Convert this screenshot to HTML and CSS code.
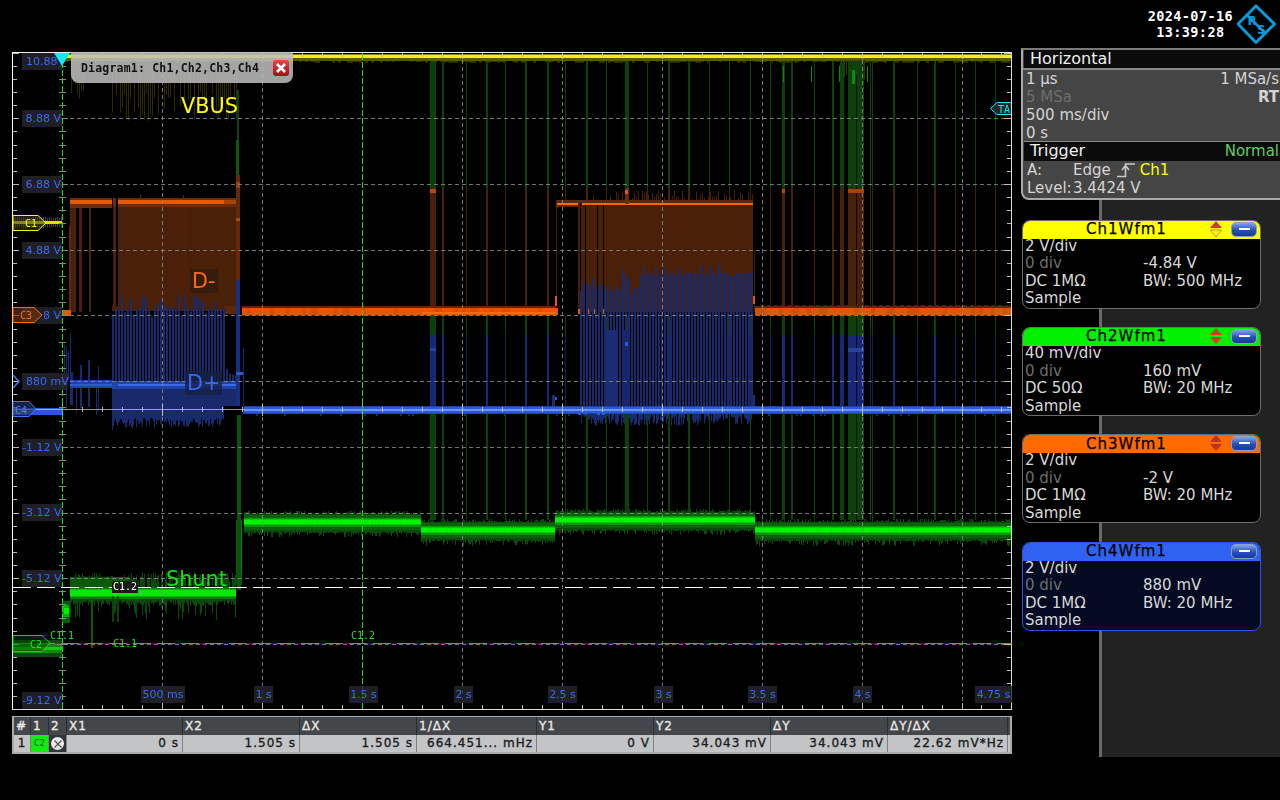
FILE: index.html
```html
<!DOCTYPE html>
<html lang="en">
<head>
<meta charset="utf-8">
<title>Oscilloscope</title>
<link rel="stylesheet" href="styles.css">
</head>
<body>
<div class="screen">
  <header class="topbar">
    <div class="clock"><div>2024-07-16</div><div>13:39:28</div></div>
    <svg class="logo" width="40" height="40" viewBox="0 0 40 40">
      <path d="M19 2 L37.5 20 L19 38.5 L1 20 Z" fill="none" stroke="#0b9ad8" stroke-width="3"/>
      <path d="M9.5 10.5 L28.5 29.5" stroke="#0b9ad8" stroke-width="2.5"/>
      <text x="10.5" y="21" class="logo-text">R</text>
      <text x="20" y="30" class="logo-text">S</text>
    </svg>
  </header>
  <main class="main">
    <section class="left">
      <div class="plot">
        <canvas id="scope" width="1000" height="658"></canvas>

        <span class="ylab y0">10.88</span>
        <span class="ylab y1">8.88 V</span>
        <span class="ylab y2">6.88 V</span>
        <span class="ylab y3">4.88 V</span>
        <span class="ylab y4">8 V</span>
        <span class="ylab y5 wide">880 mV</span>
        <span class="ylab y6">-1.12 V</span>
        <span class="ylab y7">-3.12 V</span>
        <span class="ylab y8">-5.12 V</span>
        <span class="ylab y9">-9.12 V</span>

        <span class="xlab x0">500 ms</span>
        <span class="xlab x1">1 s</span>
        <span class="xlab x2">1.5 s</span>
        <span class="xlab x3">2 s</span>
        <span class="xlab x4">2.5 s</span>
        <span class="xlab x5">3 s</span>
        <span class="xlab x6">3.5 s</span>
        <span class="xlab x7">4 s</span>
        <span class="xlab x8">4.75 s</span>

        <svg class="marks" width="1000" height="658" viewBox="12 52 1000 658">
          <path d="M54 53 H70 L62 66 Z" fill="#19e6f0"/>
          <path d="M13 215.5 H38 L46 223 L38 230.5 H13 Z" fill="rgba(60,60,0,.55)" stroke="#ffff00"/>
          <text x="25" y="227" class="mark-text" fill="#ffff00">C1</text>
          <path d="M13 307.5 H34 L42 315 L34 322.5 H13 Z" fill="rgba(110,50,10,.65)" stroke="#ff6a13"/>
          <text x="20" y="319" class="mark-text" fill="#ff6a13">C3</text>
          <path d="M13 401.5 H29 L36 409 L29 416.5 H13 Z" fill="rgba(40,50,90,.65)" stroke="#3c78f0"/>
          <text x="15" y="414" class="mark-text" fill="#5f7fc8">C4</text>
          <path d="M13 635.5 H42 L50 643 L42 651.5 H13 Z" fill="rgba(0,60,0,.5)" stroke="#19d219"/>
          <text x="30" y="648" class="mark-text" fill="#22e022">C2</text>
          <path d="M13 375 L19 381.5 L13 388" fill="none" stroke="#3c78f0" stroke-width="1.5"/>
          <path d="M1011 102.5 H997 L990.5 108.5 L997 114.5 H1011" fill="#202a2a" stroke="#19e6f0"/>
          <text x="998" y="113" class="mark-text" fill="#19e6f0">TA</text>
        </svg>

        <span class="note vbus">VBUS</span>
        <span class="note dminus">D-</span>
        <span class="note dplus">D+</span>
        <span class="note shunt">Shunt</span>

        <span class="cur cur-a">C1.1</span>
        <span class="cur cur-b">C1.2</span>
        <span class="cur cur-c">C1.1</span>
        <span class="cur cur-d">C1.2</span>

        <div class="dialog">
          <span class="dialog-title">Diagram1: Ch1,Ch2,Ch3,Ch4</span>
          <span class="close">
            <svg width="12" height="12" viewBox="0 0 12 12"><path d="M2 2 L10 10 M10 2 L2 10" stroke="#fff" stroke-width="2.6"/></svg>
          </span>
        </div>
      </div>

      <div class="cursors">
        <div class="row head">
          <div class="cell">#</div><div class="cell">1</div><div class="cell">2</div>
          <div class="cell">X1</div><div class="cell">X2</div><div class="cell">ΔX</div><div class="cell">1/ΔX</div>
          <div class="cell">Y1</div><div class="cell">Y2</div><div class="cell">ΔY</div><div class="cell">ΔY/ΔX</div>
        </div>
        <div class="row vals">
          <div class="cell idx">1</div>
          <div class="cell chip">C2</div>
          <div class="cell xbtn"><span class="xdot"><svg width="10" height="10" viewBox="0 0 10 10"><path d="M1.5 1.5 L8.5 8.5 M8.5 1.5 L1.5 8.5" stroke="#555" stroke-width="1.4"/></svg></span></div>
          <div class="cell num">0 s</div><div class="cell num">1.505 s</div><div class="cell num">1.505 s</div><div class="cell num">664.451... mHz</div>
          <div class="cell num">0 V</div><div class="cell num">34.043 mV</div><div class="cell num">34.043 mV</div><div class="cell num">22.62 mV*Hz</div>
        </div>
      </div>
    </section>

    <aside class="side">
      <div class="hpanel">
        <div class="hhead">Horizontal</div>
        <div class="hline"><span>1 µs</span><span>1 MSa/s</span></div>
        <div class="hline"><span class="dim">5 MSa</span><span class="rt">RT</span></div>
        <div class="hline"><span>500 ms/div</span></div>
        <div class="hline"><span>0 s</span></div>
        <div class="hhead trig"><span>Trigger</span><span class="normal">Normal</span></div>
        <div class="tline">
          <span class="tl-a">A:</span><span class="tl-b">Edge</span>
          <svg class="edge" width="18" height="16" viewBox="0 0 18 16"><path d="M0 14.5 H8.5 V2 H18 M5 8 L8.5 3.5 L12 8" fill="none" stroke="#c8c8c8" stroke-width="1.6"/></svg>
          <span class="ch1">Ch1</span>
        </div>
        <div class="tline"><span class="tl-a level">Level:</span><span>3.4424 V</span></div>
      </div>

      <div class="card">
        <div class="chead yellow"><span class="ctitle">Ch1Wfm1</span>
          <svg class="arrows" width="14" height="18" viewBox="0 0 14 18"><path d="M7 1 L13 8 H1 Z" fill="#c8402a"/><path d="M1.5 10 H12.5 L7 17 Z" fill="none" stroke="#d08a10"/></svg>
          <span class="minus"></span></div>
        <div class="cbody">
          <div class="full">2 V/div</div>
          <div class="dim">0 div</div><div>-4.84 V</div>
          <div>DC 1MΩ</div><div>BW: 500 MHz</div>
          <div class="full">Sample</div>
        </div>
      </div>

      <div class="card">
        <div class="chead green"><span class="ctitle">Ch2Wfm1</span>
          <svg class="arrows" width="14" height="18" viewBox="0 0 14 18"><path d="M7 1 L13 8 H1 Z" fill="#c8402a"/><path d="M1 10 H13 L7 17 Z" fill="#c8402a"/></svg>
          <span class="minus"></span></div>
        <div class="cbody">
          <div class="full">40 mV/div</div>
          <div class="dim">0 div</div><div>160 mV</div>
          <div>DC 50Ω</div><div>BW: 20 MHz</div>
          <div class="full">Sample</div>
        </div>
      </div>

      <div class="card">
        <div class="chead orange"><span class="ctitle">Ch3Wfm1</span>
          <svg class="arrows" width="14" height="18" viewBox="0 0 14 18"><path d="M7 1 L13 8 H1 Z" fill="#b8341f"/><path d="M1 10 H13 L7 17 Z" fill="#b8341f"/></svg>
          <span class="minus"></span></div>
        <div class="cbody">
          <div class="full">2 V/div</div>
          <div class="dim">0 div</div><div>-2 V</div>
          <div>DC 1MΩ</div><div>BW: 20 MHz</div>
          <div class="full">Sample</div>
        </div>
      </div>

      <div class="card selected">
        <div class="chead blue"><span class="ctitle">Ch4Wfm1</span>
          <span class="minus"></span></div>
        <div class="cbody">
          <div class="full">2 V/div</div>
          <div class="dim">0 div</div><div>880 mV</div>
          <div>DC 1MΩ</div><div>BW: 20 MHz</div>
          <div class="full">Sample</div>
        </div>
      </div>
    </aside>
  </main>
</div>
<script src="scope.js"></script>
</body>
</html>
```
FILE: styles.css
```css
* { box-sizing: border-box; }
html, body { margin: 0; padding: 0; background: #000; }
body { width: 1280px; height: 800px; overflow: hidden; font-family: "DejaVu Sans", sans-serif; color: #ddd; }

.screen { display: flex; flex-direction: column; width: 1280px; height: 800px; }

.topbar { height: 48px; display: flex; justify-content: flex-end; align-items: flex-start; padding-right: 3px; }
.clock { margin-top: 8px; margin-right: 4px; font: bold 13.5px/16px "DejaVu Sans Mono", monospace; letter-spacing: .4px; text-align: center; color: #fff; }
.logo { margin-top: 4px; }
.logo-text { font: bold 12px "DejaVu Sans", sans-serif; fill: #0b9ad8; }

.main { display: flex; height: 709px; }
.left { width: 1012px; padding: 4px 0 0 12px; display: flex; flex-direction: column; gap: 6px; }

.plot { position: relative; width: 1000px; height: 658px; flex: none; overflow: hidden; }
.plot canvas { display: block; }
.marks { position: absolute; left: 0; top: 0; }
.mark-text { font: 10px "DejaVu Sans Mono", monospace; }

.ylab, .xlab { position: absolute; height: 17px; font-size: 11px; line-height: 17px; color: #3a68f4; background: rgba(38, 38, 46, .82); white-space: nowrap; }
.ylab { left: 10px; width: 40px; text-align: right; padding-right: 1px; overflow: visible; }
.ylab.wide { width: 46px; text-align: left; padding-left: 4px; }
.y0 { top: 1px; text-align: left; padding-left: 4px; }
.y1 { top: 58px; }
.y2 { top: 124px; }
.y3 { top: 190px; }
.y4 { top: 255px; }
.y5 { top: 321px; }
.y6 { top: 387px; }
.y7 { top: 452px; }
.y8 { top: 518px; }
.y9 { top: 640px; }

.xlab { top: 634px; text-align: center; }
.x0 { left: 129px; width: 44px; }
.x1 { left: 242px; width: 19px; }
.x2 { left: 337px; width: 29px; }
.x3 { left: 442px; width: 19px; }
.x4 { left: 536px; width: 29px; }
.x5 { left: 642px; width: 19px; }
.x6 { left: 736px; width: 29px; }
.x7 { left: 841px; width: 19px; }
.x8 { left: 963px; width: 37px; }

.note { position: absolute; font-size: 20.8px; line-height: 24px; padding: 0 2px; white-space: nowrap; }
.vbus { left: 167px; top: 42px; color: #ffff00; }
.dminus { left: 178px; top: 217px; color: #ff6a13; background: rgba(50, 26, 14, .8); }
.dplus { left: 173px; top: 319px; color: #3a68f4; background: rgba(22, 32, 66, .8); }
.shunt { left: 152px; top: 515px; color: #12e012; }

.cur { position: absolute; font: 10px/12px "DejaVu Sans Mono", monospace; color: #22e022; }
.cur-a { left: 38px; top: 578px; }
.cur-b { left: 100px; top: 529px; color: #fff; background: #1a1a1a; padding: 0 1px; }
.cur-c { left: 101px; top: 586px; }
.cur-d { left: 339px; top: 578px; }

.dialog { position: absolute; left: 59px; top: 0; width: 222px; height: 31px; display: flex; align-items: center; justify-content: space-between; padding: 1px 4px 0 10px; background: rgba(190, 190, 190, .86); border-radius: 0 0 8px 8px; }
.dialog-title { font: bold 11.5px "DejaVu Sans Mono", monospace; letter-spacing: .2px; color: #111; white-space: nowrap; }
.close { width: 16px; height: 16px; display: flex; align-items: center; justify-content: center; border-radius: 3px; background: linear-gradient(#e24a4a, #a80d0d); }

.cursors { width: 1000px; height: 38px; border: 2px solid #a9a9a9; border-top-width: 1px; }
.row { display: grid; grid-template-columns: 17px 18px 18px 116px 117px 117px 120px 117px 117px 117px 120px; }
.head { height: 18px; background: #43474a; color: #e8e8e8; font-size: 12px; line-height: 18px; letter-spacing: 1px; -webkit-text-stroke: .35px #e8e8e8; }
.head .cell { padding-left: 2px; border-right: 1px solid #2c2f31; }
.vals { height: 17px; background: #c3c4c6; color: #1c1c1c; font-size: 12px; line-height: 17px; letter-spacing: 1px; -webkit-text-stroke: .35px #1c1c1c; }
.vals .cell { border-right: 1px solid #808080; }
.num { text-align: right; padding-right: 3px; white-space: nowrap; }
.idx { text-align: center; }
.chip { background: #0cf00c; color: #044a04; font: 9px/17px "DejaVu Sans Mono", monospace; -webkit-text-stroke: 0; text-align: center; letter-spacing: 0; }
.xbtn { background: #2f363c; display: flex; align-items: center; justify-content: center; }
.xdot { width: 13px; height: 13px; border-radius: 50%; background: #eee; display: flex; align-items: center; justify-content: center; }

.side { width: 268px; padding-left: 9px; background: linear-gradient(to right, #000 87px, #6a6a6a 87px, #6a6a6a 90px, #222 90px); display: flex; flex-direction: column; align-items: flex-start; gap: 18.3px; }

.hpanel { width: 259px; height: 152px; margin-bottom: 1.4px; background: #454545; border-left: 2px solid #a8a8a8; border-bottom: 2px solid #a8a8a8; border-top: 2px solid #7a7a7a; border-bottom-left-radius: 8px; font-size: 15px; line-height: 18px; color: #d4d4d4; }
.hhead { height: 18px; margin-left: 1px; background: #0b0b0b; padding-left: 6px; font-size: 16px; color: #efefef; display: flex; justify-content: space-between; }
.hline { height: 18px; padding: 0 1px 0 3px; display: flex; justify-content: space-between; white-space: nowrap; position: relative; top: 1px; }
.hline:nth-child(2) { margin-top: 1px; box-shadow: 0 -2px 0 #888; }
.hline .rt { font-weight: bold; }
.dim { color: #6e6e6e !important; }
.trig { margin-top: 1px; height: 19px; box-shadow: 0 -1px 0 #888; padding-right: 1px; }
.normal { color: #62cc62; font-size: 15px; }
.tline { height: 18px; display: flex; align-items: center; padding-left: 4px; white-space: nowrap; }
.tl-a { width: 46px; }
.tl-a.level { width: 46px; }
.tl-b { margin-right: 6px; }
.edge { margin-right: 5px; }
.ch1 { color: #ffff00; }

.card { width: 239px; height: 89px; margin-left: 1px; border: 1px solid #6d6d6d; border-radius: 8px; background: #000; overflow: hidden; }
.card.selected { border-color: #2f55d8; background: #040a22; }
.chead { position: relative; height: 19px; margin: -1px -1px 0; border-radius: 8px 8px 0 0; display: flex; align-items: center; justify-content: center; padding-right: 30px; font-size: 15px; }
.ctitle { letter-spacing: 1px; color: #000; -webkit-text-stroke: .25px #000; }
.yellow { background: #ffff00; }
.green { background: #00f000; }
.orange { background: #ff6a00; }
.blue { background: #2f62f0; }
.arrows { position: absolute; left: 187px; top: 0; }
.minus { position: absolute; left: 209px; top: 2px; width: 26px; height: 15px; border-radius: 5px; background: linear-gradient(#7ea6ee, #2750b8 55%, #163a98); border: 1px solid #90a0c0; }
.minus::after { content: ""; position: absolute; left: 7px; top: 5px; width: 11px; height: 2px; background: #fff; }
.cbody { display: grid; grid-template-columns: 118px 1fr; margin-top: -1px; padding: 0 0 0 2px; font-size: 15px; line-height: 17.6px; color: #d8d8d8; white-space: nowrap; }
.full { grid-column: 1 / -1; }
```
FILE: scope.js
```js
(function () {
  var cv = document.getElementById('scope');
  var c = cv.getContext('2d');
  c.translate(-12, -52);

  var seed = 12345;
  function rnd() {
    seed = (seed + 0x6D2B79F5) | 0;
    var t = Math.imul(seed ^ (seed >>> 15), 1 | seed);
    t = (t + Math.imul(t ^ (t >>> 7), 61 | t)) ^ t;
    return ((t ^ (t >>> 14)) >>> 0) / 4294967296;
  }
  function r(x, y, w, h, col) { c.fillStyle = col; c.fillRect(x, y, w, h); }
  function vr(x, y0, y1, w, col) { r(x, y0, w, y1 - y0, col); }

  var DG = '#0a4208', OR = '#4a2008', BL = '#182a6c';

  // ---- spikes crossing all levels [x, width]
  var spikes = [[430,6],[442,2],[466,1],[486,2],[505,1],[525,2],[547,2],[565,1],[586,2],[606,1],[625,4],
    [647,1],[668,2],[688,2],[709,1],[729,1],[750,1],[770,1],[782,3],[791,2],[814,1],[832,2],[840,4],
    [848,8],[857,7],[870,1],[872,1],[893,2],[917,1],[934,2],[955,1],[975,1],[995,1]];

  // ---- yellow
  r(62, 54, 950, 1, '#8a8a10');
  r(62, 55, 950, 3, '#f2f200');
  r(62, 58, 950, 3, '#5a5a00');
  for (var x = 62; x < 1011; x += 3) { if (rnd() < .6) r(x, 61, 3, 1 + Math.floor(rnd() * 2), '#2e2e00'); }
  for (x = 13; x < 62; x += 2) { vr(x, 217 + (rnd() * 2 | 0), 228 - (rnd() * 2 | 0), 1, '#4a4a00'); }
  r(13, 221, 49, 3, '#e0e000');
  // yellow droops
  for (x = 112; x < 238; x += 2) { if (rnd() < .75) vr(x, 60, 92 + rnd() * 30, 1, '#2c2c00'); }
  for (x = 71; x < 84; x += 2) { vr(x, 60, 80 + rnd() * 20, 1, '#2c2c00'); }
  for (x = 840; x < 866; x += 2) { vr(x, 60, 72 + rnd() * 8, 1, '#343400'); }

  // ---- green verticals (upper portion)
  spikes.forEach(function (s) {
    vr(s[0], 61, 188, s[1], DG);
    vr(s[0], 316, 335, s[1], DG);
  });
  vr(237, 90, 160, 2, DG);
  vr(236, 140, 200, 3, '#0c5a0c');
  for (x = 781; x < 866; x += 28) { vr(x + 2, 66, 82, 1, '#0d8a0d'); }
  vr(852, 70, 84, 3, '#0d8a0d');

  // ---- orange: first burst
  [[70,6],[79,3],[89,2]].forEach(function (s) { vr(s[0], 198, 312, s[1], OR); });
  vr(69, 226, 312, 2, '#5a280a');
  r(70, 198, 168, 10, '#6e2d0a');
  r(70, 200, 42, 4, '#e35a05');
  r(118, 200, 106, 4, '#e35a05');
  r(224, 200, 14, 4, '#a84208');
  vr(112, 198, 312, 1, '#000');
  vr(116, 198, 312, 2, '#000');
  vr(113, 207, 310, 3, OR);
  vr(118, 207, 306, 120, OR);
  for (x = 118; x < 236; x += 2) vr(x, 207, 306, 1, rnd() < .2 ? '#4e2209' : OR);
  r(62, 310, 9, 6, '#e35a05');
  r(112, 306, 126, 5, OR);
  r(224, 306, 14, 8, '#5a280a');
  vr(236, 175, 314, 4, '#622a0a');
  r(236, 182, 4, 6, '#9a4008');
  r(236, 218, 4, 3, '#b04a08');
  vr(140, 195, 198, 1, '#5a280a'); vr(183, 195, 198, 1, '#5a280a');

  // ---- orange: idle level
  function orangeLow(x0, x1) {
    r(x0, 306, x1 - x0, 10, '#5e2808');
    for (var i = x0; i < x1; i += 4) { r(i, 308, 4, 7, rnd() < .3 ? '#cf5204' : '#e05805'); }
  }
  orangeLow(242, 556);
  r(422, 312, 134, 2, '#ff6a08');
  orangeLow(755, 1011);
  for (x = 760; x < 1011; x += 7) { r(x, 305, 4, 1, '#4a2008'); }

  // ---- orange spikes
  spikes.forEach(function (s) { vr(s[0], 188, 306, s[1], s[1] > 1 ? OR : '#40200a'); });
  r(430, 189, 6, 4, '#b8490a'); r(782, 189, 3, 4, '#b8490a'); r(848, 189, 16, 4, '#a84208');

  // ---- orange: second burst
  vr(556, 200, 306, 1, OR);
  r(556, 200, 22, 8, '#5e2808');
  r(557, 203, 21, 2, '#ff6a08');
  r(558, 207, 20, 1, '#000');
  r(558, 208, 20, 98, '#000');
  vr(578, 203, 312, 175, OR);
  for (x = 578; x < 753; x += 2) vr(x, 203, 306, 1, rnd() < .2 ? '#4e2209' : OR);
  [[580,1],[585,1],[597,1],[603,1]].forEach(function (s) { vr(s[0], 200, 316, s[1], '#000'); });
  r(578, 200, 175, 3, '#5e2808');
  r(582, 203, 171, 2, '#ff6a08');
  for (x = 610; x < 753; x += 2) { if (rnd() < .8) vr(x, 190 + rnd() * 10, 200, 1, OR); }
  vr(625, 188, 204, 4, '#6e2d0a'); r(625, 190, 3, 4, '#e35a05');
  vr(593, 195, 200, 1, OR);
  for (x = 578; x < 606; x += 8) { r(x, 309, 3, 5, '#e35a05'); }
  vr(754, 250, 312, 1, OR); r(753, 296, 2, 8, '#e35a05');
  vr(555, 296, 306, 2, '#e35a05');

  // ---- blue burst 1
  r(13, 408, 49, 7, '#2a56d0');
  r(13, 409, 49, 1, '#3a6ae8');
  for (x = 64; x < 112; x += 2) { if (rnd() < .35) vr(x, 360 + rnd() * 25, 410 + rnd() * 6, 1, BL); }
  vr(70, 372, 405, 3, BL); vr(80, 365, 408, 2, BL); vr(88, 360, 407, 2, BL);
  for (x = 64; x < 72; x += 2) vr(x, 330 + rnd() * 50, 380, 1, BL);
  r(70, 380, 42, 8, '#1f44a8');
  r(70, 384, 42, 2, '#2c5ad0');
  for (x = 112; x < 236; x += 3) {
    vr(x, x > 224 ? 365 + rnd() * 10 : 296 + rnd() * 22, 381, 2, BL);
  }
  r(112, 381, 126, 8, '#1f44a8');
  r(118, 384, 118, 2, '#3c6ae6');
  r(112, 389, 112, 20, BL);
  r(224, 389, 12, 17, BL);
  for (x = 112; x < 224; x += 1) vr(x, 408, 418 + rnd() * 10, 1, BL);
  vr(236, 280, 406, 4, '#16307e');
  r(236, 372, 8, 3, '#2c5ad0');
  vr(243, 348, 414, 1, BL);

  // ---- blue baseline + spikes
  spikes.forEach(function (s) { vr(s[0], 335, 406, s[1], s[1] > 1 ? '#15287a' : '#12205c'); });
  r(430, 348, 6, 3, '#24479c'); r(848, 348, 16, 4, '#24479c');

  // ---- blue burst 2
  for (x = 580; x < 752; x += 3) {
    var top = x < 622 ? 284 + rnd() * 8 : x < 640 ? 275 + rnd() * 20 : 272 + rnd() * 4;
    if (rnd() < .12) top -= 8;
    vr(x, top, 406, 2, BL);
  }
  vr(606, 330, 406, 12, '#1a2d74');
  vr(622, 330, 406, 8, '#16286c');
  r(625, 342, 3, 4, '#2c5ad0');
  vr(552, 395, 406, 3, '#1a2d74'); vr(753, 395, 406, 2, '#1a2d74');
  r(555, 397, 2, 3, '#2c5ad0');

  r(244, 406, 767, 8, '#1f44a8');
  r(244, 407, 767, 6, '#2c5ad6');
  r(244, 409, 767, 2, '#6a94f8');
  for (x = 580; x < 752; x += 1) { if (rnd() < .8) vr(x, 414, 416 + rnd() * 10, 1, BL); }
  for (x = 244; x < 1011; x += 4) { if (rnd() < .18 && (x < 580 || x > 752)) r(x, 414, 2, 2, BL); }
  [[578,3],[585,3],[597,3],[602,3]].forEach(function (s) { r(s[0], 411, s[1], 4, '#2c5ad6'); });
  vr(112, 400, 430, 1, BL);

  // ---- green lower verticals
  spikes.forEach(function (s) { vr(s[0], 414, 520, s[1], DG); });
  vr(237, 415, 590, 4, '#0b520b');
  vr(236, 520, 585, 6, '#0b520b');
  vr(241, 520, 575, 1, '#0d7a0d');

  // ---- green bands
  function band(x0, x1, yc, fuzz) {
    for (var i = x0; i < x1; i++) {
      var t = yc - 9 + rnd() * 2 | 0, b = yc + 10 + rnd() * 2 | 0;
      if (rnd() < .3) t -= 2;
      if (rnd() < .45) b += (rnd() * fuzz) | 0;
      r(i, t, 1, b - t, '#0a4a0a');
    }
    r(x0, yc - 7, x1 - x0, 15, '#0b620b');
    r(x0, yc - 4, x1 - x0, 9, '#0a960a');
    r(x0, yc - 3, x1 - x0, 6, '#06c806');
    for (i = x0; i < x1; i += 1) r(i, yc - 2, 1, 4, rnd() < .2 ? '#0ae80a' : '#00f800');
  }
  band(244, 421, 522, 5);
  band(421, 555, 530, 6);
  band(555, 755, 520, 5);
  band(755, 1011, 530, 6);

  // ---- green: left part
  r(13, 640, 49, 17, '#0a4a0a');
  r(13, 644, 49, 9, '#0c8a0c');
  r(13, 647, 49, 3, '#14c814');
  r(62, 601, 8, 22, '#0a5a0a');
  r(63, 605, 6, 12, '#0cb00c');
  r(64, 608, 5, 6, '#00f000');
  for (x = 70; x < 236; x++) {
    if (rnd() < .7) vr(x, 572 + rnd() * 10, 589, 1, '#0a4a0a');
    vr(x, 589, 600 + rnd() * (rnd() < .25 ? 20 : 6), 1, '#0a4a0a');
  }
  r(70, 577, 60, 10, '#0b5a0b');
  r(70, 587, 166, 12, '#0a7a0a');
  r(70, 589, 166, 8, '#0ab40a');
  r(70, 590, 166, 6, '#08e808');
  vr(91, 598, 648, 2, '#0c5a0c');
  vr(112, 596, 622, 2, DG); vr(117, 596, 622, 2, DG);

  // ---- grid
  var GX = [], GY = [];
  for (var i = 0; i < 10; i++) GX.push(Math.round(62.4 + 99.9 * i));
  for (i = 0; i <= 10; i++) GY.push(Math.round(52.6 + 65.7 * i));
  var grid = 'rgba(135,135,135,.85)';
  GX.forEach(function (gx, k) {
    if (k === 0 || k === 3) return;
    for (var y = 60; y < 706; y += 7) r(gx, y, 1, 4, grid);
  });
  GY.forEach(function (gy, k) {
    if (k === 0 || k === 10) return;
    for (var x = 63; x < 1008; x += 7) r(x, gy, 4, 1, grid);
  });

  // ---- axes and ticks
  r(13, 409, 231, 1, 'rgba(190,190,190,.8)');
  for (x = 0; x < 50; x++) {
    var gx = 62.4 + 19.98 * x;
    var major = x % 5 === 0;
    r(Math.round(gx), major ? 404 : 407, 1, major ? 12 : 5, 'rgba(205,205,205,.85)');
    r(Math.round(gx), major ? 703 : 705, 1, major ? 6 : 4, '#bbb');
    r(Math.round(gx), 53, 1, major ? 6 : 4, '#bbb');
  }
  for (i = 0; i <= 50; i++) {
    var gy = Math.round(52.6 + 13.14 * i);
    var M = i % 5 === 0;
    r(13, gy, M ? 6 : 4, 1, '#bbb');
    r(M ? 1004 : 1007, gy, M ? 7 : 4, 1, '#bbb');
    r(M ? 57 : 59, gy, M ? 11 : 7, 1, '#888');
  }

  // ---- border
  r(12, 52, 1000, 1, '#eee');
  r(12, 52, 1, 658, '#fff');
  r(1011, 52, 1, 658, '#ddd');
  r(12, 709, 1000, 1, '#ddd');

  // ---- cursors
  for (var y = 54; y < 709; y += 8) { r(62, y, 1, 6, '#12e012'); r(362, y, 1, 6, '#12e012'); }
  for (x = 13; x < 1011; x += 24) { r(x, 587, 18, 1, '#fff'); r(x, 643, 18, 1, '#12d012'); }
}());
```
